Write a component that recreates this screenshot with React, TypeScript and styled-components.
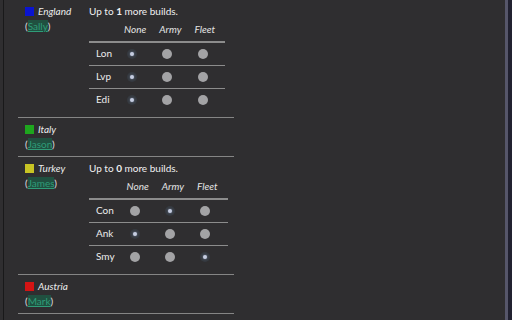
import React from "react";
import styled, { createGlobalStyle } from "styled-components";

const GlobalStyle = createGlobalStyle`
  html, body { margin: 0; padding: 0; background: #2f2e30; }
  body { font-family: Lato, "Open Sans", "Liberation Sans", sans-serif; color: #ececec; }
  #root { height: 320px; overflow: hidden; }
`;

const Frame = styled.div`
  display: flex;
  height: 320px;
  padding-left: 3px;
  background: #2f2e30;
  overflow: hidden;
`;

const Panel = styled.div`
  flex: 1;
  border-left: 1px solid #19191a;
  padding-left: 14px;
  overflow: hidden;
`;

const ScrollTrack = styled.div`
  width: 7px;
  display: flex;
`;
const ScrollThumb = styled.div`
  width: 3px;
  background: #56566a;
`;
const ScrollRest = styled.div`
  flex: 1;
  background: #212130;
`;

const List = styled.div`
  width: 216px;
`;

const Section = styled.div`
  display: flex;
  border-bottom: 1px solid #858585;
  padding: 4px 0 4px;
`;

const CountryCell = styled.div`
  width: 64px;
  padding-left: 7px;
  font-size: 10px;
  line-height: 15px;
`;

const NameLine = styled.div`
  display: flex;
  align-items: center;
  gap: 4px;
  font-style: italic;
  color: #ececec;
`;

const Flag = styled.span<{ $c: string }>`
  width: 9px;
  height: 9px;
  background: ${(p) => p.$c};
  flex: none;
`;

const Player = styled.div`
  color: #e0e0e0;
`;

const PlayerLink = styled.a`
  color: #2f9c78;
  text-decoration: underline;
  background: rgba(28, 92, 70, 0.75);
`;

const BuildsCell = styled.div`
  font-size: 10px;
  line-height: 15px;
  padding-bottom: 2px;
`;

const Note = styled.div`
  color: #f0f0f0;
  b { font-weight: 700; }
`;

const Table = styled.table`
  border-collapse: collapse;
`;

const HeadCell = styled.th<{ $last?: boolean }>`
  font-weight: 400;
  font-style: italic;
  text-align: left;
  color: #e4e4e4;
  font-size: 10px;
  line-height: 15px;
  box-sizing: border-box;
  height: 23px;
  padding: 0 ${(p) => (p.$last ? 10 : 13)}px 4px 0;
  border-bottom: 2px solid #8c8c8c;
  vertical-align: bottom;
`;

const Row = styled.tr`
  & + & td { border-top: 1px solid #8c8c8c; }
`;

const LabelCell = styled.td`
  box-sizing: border-box;
  padding: 0 12px 0 7px;
  height: 23px;
  color: #ececec;
`;

const RadioCell = styled.td`
  box-sizing: border-box;
  padding: 0 0 0 3px;
  height: 23px;
  vertical-align: middle;
`;

const Radio = styled.span<{ $on?: boolean }>`
  display: block;
  width: 10px;
  height: 10px;
  border-radius: 50%;
  position: relative;
  background: ${(p) => (p.$on ? "#353a40" : "#a3a3a5")};
  &::after {
    content: "";
    display: ${(p) => (p.$on ? "block" : "none")};
    position: absolute;
    left: 3px;
    top: 3px;
    width: 4px;
    height: 4px;
    border-radius: 50%;
    background: #c6cde0;
    box-shadow: 0 0 2px #8090b0;
  }
`;

type Build = { label: string; choice: number };
type Country = {
  name: string;
  color: string;
  player: string;
  count?: number;
  builds?: Build[];
};

const countries: Country[] = [
  {
    name: "England",
    color: "#0a14d0",
    player: "Sally",
    count: 1,
    builds: [
      { label: "Lon", choice: 0 },
      { label: "Lvp", choice: 0 },
      { label: "Edi", choice: 0 },
    ],
  },
  { name: "Italy", color: "#1ea61e", player: "Jason" },
  {
    name: "Turkey",
    color: "#c8c424",
    player: "James",
    count: 0,
    builds: [
      { label: "Con", choice: 1 },
      { label: "Ank", choice: 0 },
      { label: "Smy", choice: 2 },
    ],
  },
  { name: "Austria", color: "#d41414", player: "Mark" },
  { name: "France", color: "#3aa0d8", player: "Anna" },
];

const options = ["None", "Army", "Fleet"];

export default function App() {
  return (
    <>
      <GlobalStyle />
      <Frame>
        <Panel>
          <List>
            {countries.map((c) => (
              <Section key={c.name}>
                <CountryCell>
                  <NameLine>
                    <Flag $c={c.color} />
                    {c.name}
                  </NameLine>
                  <Player>
                    (<PlayerLink href="#">{c.player}</PlayerLink>)
                  </Player>
                </CountryCell>
                {c.builds && (
                  <BuildsCell>
                    <Note>
                      Up to <b>{c.count}</b> more builds.
                    </Note>
                    <Table>
                      <thead>
                        <tr>
                          <HeadCell />
                          {options.map((o, i) => (
                            <HeadCell key={o} $last={i === options.length - 1}>
                              {o}
                            </HeadCell>
                          ))}
                        </tr>
                      </thead>
                      <tbody>
                        {c.builds.map((b) => (
                          <Row key={b.label}>
                            <LabelCell>{b.label}</LabelCell>
                            {options.map((o, i) => (
                              <RadioCell key={o}>
                                <Radio $on={b.choice === i} />
                              </RadioCell>
                            ))}
                          </Row>
                        ))}
                      </tbody>
                    </Table>
                  </BuildsCell>
                )}
              </Section>
            ))}
          </List>
        </Panel>
        <ScrollTrack>
          <ScrollThumb />
          <ScrollRest />
        </ScrollTrack>
      </Frame>
    </>
  );
}
